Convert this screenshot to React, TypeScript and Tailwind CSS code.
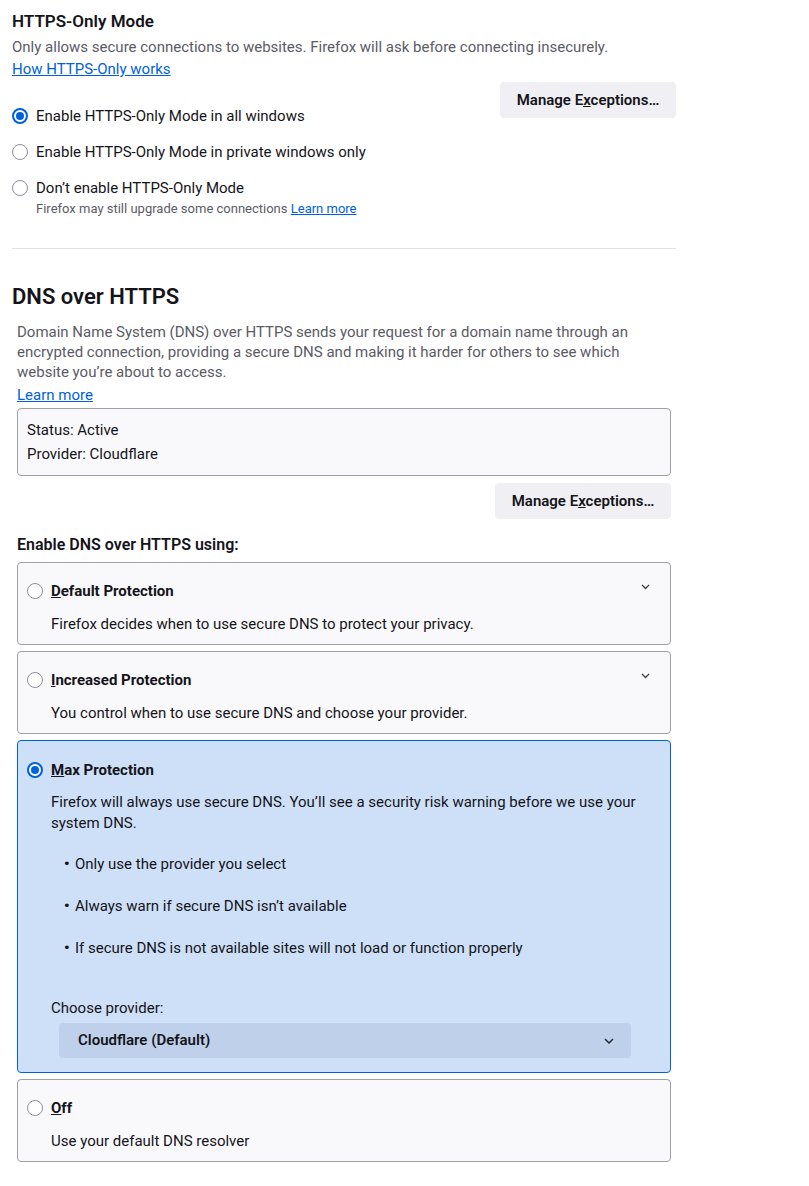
import React from "react";

function Radio({ checked }: { checked?: boolean }) {
  if (checked) {
    return (
      <span className="flex h-4 w-4 shrink-0 items-center justify-center rounded-full border-2 border-[#0061e0] bg-white">
        <span className="h-2 w-2 rounded-full bg-[#0061e0]" />
      </span>
    );
  }
  return <span className="h-4 w-4 shrink-0 rounded-full border border-[#8f8f9d] bg-white" />;
}

function Chevron({ className, w = 10 }: { className?: string; w?: number }) {
  return (
    <svg width={w} height={w * 0.6} viewBox="0 0 10 6" className={className}>
      <path d="M1 1l4 4 4-4" fill="none" stroke="currentColor" strokeWidth="1.5" />
    </svg>
  );
}

function ManageButton() {
  return (
    <button className="h-9 w-[176px] rounded bg-[#f0f0f4] text-[15px] font-semibold text-[#15141a]">
      Manage E<span className="underline">x</span>ceptions…
    </button>
  );
}

function OptionCard({
  accessKey,
  rest,
  desc,
  expandable,
}: {
  accessKey: string;
  rest: string;
  desc: string;
  expandable?: boolean;
}) {
  return (
    <div className="rounded border border-[#9f9fa6] bg-[#f9f9fb] pb-[10px] pl-[9px] pr-[20px] pt-[17px]">
      <div className="flex h-[22px] items-center gap-2">
        <Radio />
        <span className="text-[15px] font-bold">
          <span className="underline">{accessKey}</span>
          {rest}
        </span>
        {expandable && <Chevron w={9} className="ml-auto -mt-2 text-[#3a3944]" />}
      </div>
      <p className="mt-3 pl-6 leading-5">{desc}</p>
    </div>
  );
}

export default function App() {
  return (
    <div className="min-h-[1186px] w-[809px] bg-white text-[15px] text-[#15141a] [font-family:Roboto,'Noto_Sans',sans-serif]">
      {/* HTTPS-Only */}
      <div className="w-[676px] pl-3 pt-[9px]">
        <h1 className="text-[17px] font-semibold leading-6">HTTPS-Only Mode</h1>
        <p className="mt-1 leading-5 text-[#5b5b66]">
          Only allows secure connections to websites. Firefox will ask before connecting insecurely.
        </p>
        <a className="mt-[2px] block w-fit leading-5 text-[#0061e0] underline">How HTTPS-Only works</a>
        <div className="mt-[3px] flex items-start justify-between">
          <div className="flex flex-col gap-4 pt-6">
            <label className="flex h-5 items-center gap-2">
              <Radio checked />
              <span>Enable HTTPS-Only Mode in all windows</span>
            </label>
            <label className="flex h-5 items-center gap-2">
              <Radio />
              <span>Enable HTTPS-Only Mode in private windows only</span>
            </label>
            <div>
              <label className="flex h-5 items-center gap-2">
                <Radio />
                <span>Don’t enable HTTPS-Only Mode</span>
              </label>
              <p className="mt-[2px] pl-6 text-[13px] leading-[18px] text-[#5b5b66]">
                Firefox may still upgrade some connections{" "}
                <a className="text-[#0061e0] underline">Learn more</a>
              </p>
            </div>
          </div>
          <ManageButton />
        </div>
        <hr className="mt-[30px] border-t border-[#e0e0e6]" />
      </div>

      {/* DNS over HTTPS */}
      <div className="pl-3">
        <h2 className="mt-[33px] text-[22px] font-semibold leading-[30px]">DNS over HTTPS</h2>
      </div>
      <div className="w-[671px] pl-[17px]">
        <p className="mt-[10px] leading-5 text-[#5b5b66]">
          Domain Name System (DNS) over HTTPS sends your request for a domain name through an
          <br />
          encrypted connection, providing a secure DNS and making it harder for others to see which
          <br />
          website you’re about to access.
        </p>
        <a className="mt-[3px] block w-fit leading-5 text-[#0061e0] underline">Learn more</a>
        <div className="mt-[3px] rounded border border-[#9f9fa6] bg-[#f9f9fb] px-[9px] py-[9px] leading-6">
          <div>Status: Active</div>
          <div>Provider: Cloudflare</div>
        </div>
        <div className="mt-[7px] flex justify-end">
          <ManageButton />
        </div>

        <h3 className="mt-[15px] text-[16px] font-semibold leading-[22px]">Enable DNS over HTTPS using:</h3>

        <div className="mt-[6px] flex flex-col gap-[6px]">
          <OptionCard
            accessKey="D"
            rest="efault Protection"
            desc="Firefox decides when to use secure DNS to protect your privacy."
            expandable
          />
          <OptionCard
            accessKey="I"
            rest="ncreased Protection"
            desc="You control when to use secure DNS and choose your provider."
            expandable
          />

          <div className="rounded border border-[#0061e0] bg-[#cde0f7] pb-[14px] pl-[9px] pr-[8px] pt-[18px]">
            <div className="flex h-[22px] items-center gap-2">
              <Radio checked />
              <span className="text-[15px] font-bold">
                <span className="underline">M</span>ax Protection
              </span>
            </div>
            <div className="pl-6">
              <p className="mt-[11px] leading-[21px]">
                Firefox will always use secure DNS. You’ll see a security risk warning before we use your
                <br />
                system DNS.
              </p>
              <ul className="mt-[20px] flex flex-col gap-[22px] pl-6">
                {[
                  "Only use the provider you select",
                  "Always warn if secure DNS isn’t available",
                  "If secure DNS is not available sites will not load or function properly",
                ].map((t) => (
                  <li key={t} className="relative leading-5">
                    <span className="absolute -left-[12px] top-0 [font-family:'DejaVu_Sans',sans-serif] text-[13px]">•</span>
                    {t}
                  </li>
                ))}
              </ul>
              <p className="mt-10 leading-5">Choose provider:</p>
              <div className="ml-2 mr-[31px] mt-[5px] flex h-[35px] items-center rounded bg-[#bfd1ea] pl-[19px] pr-[17px]">
                <span className="font-semibold">Cloudflare (Default)</span>
                <Chevron className="ml-auto text-[#2b2a33]" />
              </div>
            </div>
          </div>

          <OptionCard accessKey="O" rest="ff" desc="Use your default DNS resolver" />
        </div>
      </div>
    </div>
  );
}
